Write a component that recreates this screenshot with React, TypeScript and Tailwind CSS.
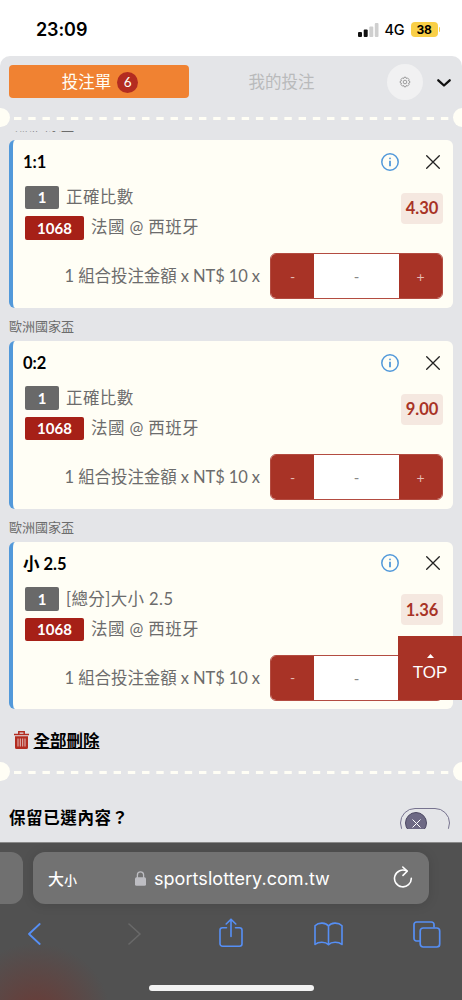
import React from 'react';

type Bet = {
    title: string;
    market: string;
    odds: string;
};

const bets: Bet[] = [
    { title: '1:1', market: '正確比數', odds: '4.30' },
    { title: '0:2', market: '正確比數', odds: '9.00' },
    { title: '小 2.5', market: '[總分]大小 2.5', odds: '1.36' },
];

function StatusBar() {
    return (
        <header className="h-14 shrink-0 flex items-center justify-between pl-9 pr-[22px] pt-[3px] bg-white font-['Inter']">
            <span className="text-[18px] font-semibold tracking-[-0.1px] text-black">23:09</span>
            <div className="flex items-center">
                <svg width="21" height="14" viewBox="0 0 21 14">
                    <rect x="0" y="9" width="4" height="5" rx="1" fill="#111" />
                    <rect x="5.7" y="6.5" width="4" height="7.5" rx="1" fill="#111" />
                    <rect x="11.3" y="3.5" width="4" height="10.5" rx="1" fill="#cfcfcf" />
                    <rect x="16.8" y="0" width="3.7" height="14" rx="1" fill="#cfcfcf" />
                </svg>
                <span className="ml-[5.5px] w-5 text-[14.5px] font-medium tracking-[-0.3px] text-black">4G</span>
                <span className="ml-[6px] w-[27px] h-[15px] rounded-[4px] bg-[#f9cf47] flex items-center justify-center text-[12px] font-bold tracking-[-0.3px] text-black">38</span>
                <span className="ml-px w-[1.5px] h-[5px] rounded-r-full bg-[#f9cf47]" />
            </div>
        </header>
    );
}

function Perforation() {
    return (
        <div className="h-[19px] shrink-0 flex items-center justify-between overflow-hidden">
            <span className="w-[19px] h-[19px] -ml-[9.5px] rounded-full bg-[#fffef5]" />
            <svg className="mt-[2px]" width="436" height="3" viewBox="0 0 436 3">
                <line x1="1" y1="1.5" x2="435.5" y2="1.5" stroke="#fffef5" strokeWidth="3" strokeDasharray="7.4 6.83" />
            </svg>
            <span className="w-[19px] h-[19px] -mr-[9.5px] rounded-full bg-[#fffef5]" />
        </div>
    );
}

function InfoIcon() {
    return (
        <svg width="18" height="18" viewBox="0 0 18 18" fill="none" stroke="#5299da">
            <circle cx="9" cy="9" r="8.2" strokeWidth="1.5" />
            <circle cx="9" cy="5.4" r="0.9" fill="#5299da" stroke="none" />
            <path d="M9 7.8v5.4" strokeWidth="1.8" />
        </svg>
    );
}

function League({ className = 'pt-[5px]' }: { className?: string }) {
    return (
        <div className={`h-[33.3px] shrink-0 flex items-center text-[13px] text-[#6c6c6c] ${className}`}>歐洲國家盃</div>
    );
}

function BetCard({ bet }: { bet: Bet }) {
    return (
        <article className="h-[167.5px] shrink-0 flex flex-col rounded-[6px] border-l-4 border-[#5299da] bg-[#fffef5] pl-[10px] pr-[10px]">
            <div className="h-[43px] flex items-center justify-between">
                <h3 className="pt-[2px] text-[16.5px] font-bold text-black">{bet.title}</h3>
                <div className="flex items-center gap-[27px] pr-[3px]">
                    <InfoIcon />
                    <svg width="14" height="14" viewBox="0 0 14 14" stroke="#222" strokeWidth="1.3" strokeLinecap="round">
                        <path d="M.7.7l12.6 12.6M13.3.7L.7 13.3" />
                    </svg>
                </div>
            </div>
            <div className="flex items-start justify-between pl-[2px] pt-[2px]">
                <div className="flex flex-col gap-[6.5px] text-[16.5px] tracking-[0.4px] text-[#6c6c6c]">
                    <div className="h-6 flex items-center">
                        <span className="w-[34px] h-[23.5px] mr-[7px] rounded-[2px] bg-[#696969] flex items-center justify-center text-[15px] font-bold tracking-normal text-white">1</span>
                        {bet.market}
                    </div>
                    <div className="h-6 flex items-center">
                        <span className="w-[59px] h-[23.5px] mr-[7px] rounded-[2px] bg-[#a62017] flex items-center justify-center text-[15px] font-bold tracking-normal text-white">1068</span>
                        法國 @ 西班牙
                    </div>
                </div>
                <span className="mt-[7.5px] w-[42px] h-[31px] pt-px rounded-[4px] bg-[#f5e8e0] flex items-center justify-center text-[16.5px] font-bold text-[#a83326]">{bet.odds}</span>
            </div>
            <div className="mt-[13.5px] flex items-center justify-end">
                <span className="mr-[10px] whitespace-nowrap text-[16.5px] tracking-[-0.09px] text-[#6c6c6c]">1 組合投注金額 x NT$ 10 x</span>
                <div className="w-[173px] h-[46px] flex rounded-[6px] overflow-hidden border border-[#b34c41] bg-white">
                    <button className="w-[43px] bg-[#a83326] text-[14px] text-[#e4bbb4]">-</button>
                    <span className="grow flex items-center justify-center text-[15px] text-[#888]">-</span>
                    <button className="w-[43px] bg-[#a83326] text-[14px] text-[#e4bbb4]">+</button>
                </div>
            </div>
        </article>
    );
}

function BrowserBar() {
    return (
        <footer className="h-[158px] shrink-0 flex flex-col border-t border-[#898989] bg-[#515151] bg-[radial-gradient(circle_at_36px_175px,#6b3a35_0px,#6b3a3500_75px)] font-['Inter']">
            <div className="mt-[9px] h-[52px] shrink-0 flex gap-[10px]">
                <div className="w-[23px] rounded-r-[12px] bg-[#707070]" />
                <div className="w-[396px] rounded-[12px] bg-[#727272] shadow-[0_1px_12px_#0000001f] flex items-center pl-[15px] pr-[16px] text-white">
                    <span className="w-[71px] mr-[16px] whitespace-nowrap font-['Noto_Sans_CJK_TC'] text-[16px] font-medium">大<span className="text-[13px]">小</span></span>
                    <svg className="shrink-0" width="11" height="15" viewBox="0 0 11 15">
                        <path d="M2.4 7V4a3.1 3.1 0 0 1 6.2 0v3" fill="none" stroke="#bdbdc2" strokeWidth="1.3" />
                        <rect x="0" y="6.3" width="11" height="8.5" rx="1.5" fill="#bdbdc2" />
                    </svg>
                    <span className="ml-[8px] grow text-[18px] tracking-[0.05px]">sportslottery.com.tw</span>
                    <svg className="-mt-[2px]" width="20" height="22" viewBox="0 0 20 22" fill="none" stroke="#fff" strokeWidth="1.6" strokeLinecap="round" strokeLinejoin="round">
                        <path d="M18.3 12.2A8.4 8.4 0 1 1 13.7 5" />
                        <path d="M9.8 1L14.2 5.2L10 9.4" />
                    </svg>
                </div>
            </div>
            <nav className="mt-[15px] h-[30px] shrink-0 flex items-center pl-[28px]">
                <svg width="13" height="22" viewBox="0 0 13 22" fill="none" stroke="#568ff5" strokeWidth="1.8" strokeLinecap="round" strokeLinejoin="round">
                    <path d="M11.7 1L1 11l10.7 10" />
                </svg>
                <svg className="ml-[87px]" width="13" height="22" viewBox="0 0 13 22" fill="none" stroke="#696969" strokeWidth="1.6" strokeLinecap="round" strokeLinejoin="round">
                    <path d="M1 1l11 10L1 21" />
                </svg>
                <svg className="ml-[78px] -mt-[2px]" width="24" height="30" viewBox="0 0 24 30" fill="none" stroke="#568ff5" strokeWidth="1.6" strokeLinecap="round" strokeLinejoin="round">
                    <path d="M7.5 9.7H3.5a2.5 2.5 0 0 0-2.5 2.5v13.5a2.5 2.5 0 0 0 2.5 2.5h17a2.5 2.5 0 0 0 2.5-2.5V12.2a2.5 2.5 0 0 0-2.5-2.5h-4" />
                    <path d="M12 18.5V1.2M7.2 6L12 1.2L16.8 6" />
                </svg>
                <svg className="ml-[71px]" width="29" height="24" viewBox="0 0 29 24" fill="none" stroke="#568ff5" strokeWidth="1.6" strokeLinejoin="round">
                    <path d="M14.5 4.2C12 .2 4.5 .2 1 3.7V22.5C4.5 19.5 11.5 19.5 14.5 22.7C17.5 19.5 24.5 19.5 28 22.5V3.7C24.5 .2 17 .2 14.5 4.2ZM14.5 4.2V22.7" />
                </svg>
                <svg className="ml-[70px]" width="28" height="27" viewBox="0 0 28 27" fill="none" stroke="#568ff5" strokeWidth="1.7">
                    <rect x="7.2" y="7" width="19.5" height="19" rx="3" />
                    <path d="M21 6.5V3.5a2.5 2.5 0 0 0-2.5-2.5H3.5A2.5 2.5 0 0 0 1 3.5v14a2.5 2.5 0 0 0 2.5 2.5h3.5" />
                </svg>
            </nav>
            <div className="mt-[35.5px] ml-[149px] w-[165px] h-[6px] rounded-full bg-[#f2f2f2]" />
        </footer>
    );
}

export default function App() {
    return (
        <div className="relative w-[462px] h-[1000px] flex flex-col overflow-hidden bg-white font-['Lato','Noto_Sans_CJK_TC',sans-serif]">
            <StatusBar />

            <main className="h-[786px] shrink-0 flex flex-col rounded-t-[10px] bg-[#e4e5e8]">
                {/* Tabs */}
                <div className="h-[52px] shrink-0 flex items-center pl-[9px] pr-[11px]">
                    <button className="-mt-px w-[180px] h-[33px] pt-px rounded-[4px] bg-[#f08232] flex items-center justify-center gap-[6px] pl-[2px] text-[16.5px] text-[#fffef5]">
                        投注單
                        <span className="w-[21px] h-[21px] rounded-full bg-[#b32c20] flex items-center justify-center text-[13.5px]">6</span>
                    </button>
                    <span className="w-[185px] text-center text-[16.5px] text-[#b9babb]">我的投注</span>
                    <button className="ml-[13px] w-9 h-9 rounded-full bg-[#f1f1f2] flex items-center justify-center">
                        <svg width="12" height="12" viewBox="0 0 24 24" fill="none" stroke="#888" strokeWidth="1.6">
                            <path d="M10 2.5h4l.8 2.6 2.3-1.2 2.9 2.9-1.3 2.4 2.7.8v4l-2.7.8 1.3 2.4-2.9 2.9-2.3-1.3-.8 2.7h-4l-.8-2.7-2.4 1.3L4 17.2l1.200-2.4-2.7-.8v-4l2.7-.8L4 6.8l2.8-2.9 2.4 1.2z" />
                            <circle cx="12" cy="12" r="3.6" />
                        </svg>
                    </button>
                    <svg className="ml-auto mt-[2px]" width="14" height="8" viewBox="0 0 14 8" fill="none" stroke="#111" strokeWidth="2.3" strokeLinecap="round" strokeLinejoin="round">
                        <path d="M1.3 1.3L7 6.5l5.7-5.2" />
                    </svg>
                </div>
                <Perforation />

                {/* Scrolling list */}
                <div className="mt-[4px] h-[698px] shrink-0 flex flex-col overflow-hidden">
                    <div className="px-[9px] flex flex-col shrink-0">
                        {bets.map((bet, i) => (
                            <React.Fragment key={bet.title}>
                                <League className={i === 0 ? '-mt-[24px] pt-[4px]' : undefined} />
                                <BetCard bet={bet} />
                            </React.Fragment>
                        ))}
                        <button className="h-[53px] flex items-center pl-[5px] pt-[8px]">
                            <svg width="15" height="18" viewBox="0 0 15 18" fill="none" stroke="#b32c20">
                                <path d="M0 3.5h15M4.8 3.2V.8h5.4v2.4" strokeWidth="1.5" />
                                <path d="M1 5.2h13v11.3a1.5 1.5 0 0 1-1.5 1.5h-10A1.5 1.5 0 0 1 1 16.5z" fill="#b32c20" stroke="none" />
                                <path d="M4 7.5v8M6.3 7.5v8M8.7 7.5v8M11 7.5v8" stroke="#e8d0d0" strokeWidth="0.9" />
                            </svg>
                            <span className="ml-[4.5px] pt-[2px] text-[16.5px] font-bold text-black underline">全部刪除</span>
                        </button>
                    </div>
                    <Perforation />
                    <div className="mt-[27px] shrink-0 flex items-start justify-between pl-[9px] pr-[12px]">
                        <span className="-mt-[3.5px] text-[16.5px] leading-[26px] font-bold tracking-[0.6px] text-black">保留已選內容？</span>
                        <span className="w-[50px] h-[30px] rounded-full border border-[#77738f] flex items-center pl-[4px]">
                            <span className="w-[22px] h-[22px] rounded-full border border-[#4d4963] bg-[#6d6984] flex items-center justify-center">
                                <svg width="9" height="9" viewBox="0 0 9 9" stroke="#fff" strokeWidth="1">
                                    <path d="M.5.5l8 8M8.5.5l-8 8" />
                                </svg>
                            </span>
                        </span>
                    </div>
                </div>
            </main>

            <BrowserBar />

            {/* Back to top */}
            <button className="absolute right-0 top-[636px] w-16 h-16 bg-[#a83326] flex flex-col items-center pt-[18px] text-white">
                <svg width="7" height="4" viewBox="0 0 7 4">
                    <path d="M0 4L3.5 0L7 4z" fill="#fff" />
                </svg>
                <span className="mt-[4.5px] text-[17px] leading-5 font-['Liberation_Sans']">TOP</span>
            </button>
        </div>
    );
}
